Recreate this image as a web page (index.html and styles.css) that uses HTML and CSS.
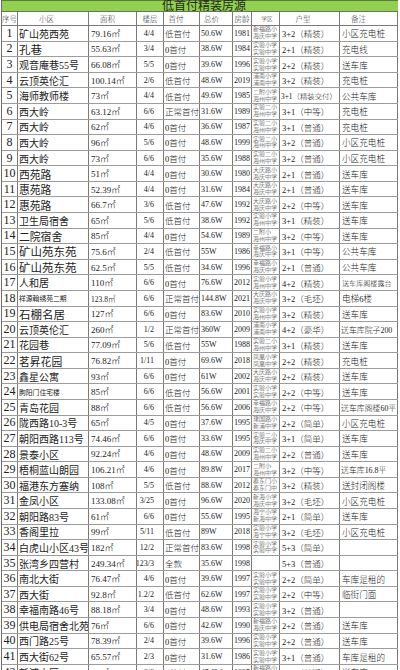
FILE: index.html
```html
<!DOCTYPE html>
<html lang="zh-CN">
<head>
<meta charset="utf-8">
<title>低首付精装房源</title>
<link rel="stylesheet" href="styles.css">
</head>
<body>
<div class="sheet">
  <div class="title">低首付精装房源</div>
  <div class="row head">
    <div>序号</div><div class="h-name">小区</div><div class="h-area">面积</div><div>楼层</div><div class="h-dp">首付</div><div class="h-tot">总价</div><div>房龄</div><div class="h-sch">学区</div><div class="h-type">户型</div><div class="h-note">备注</div>
  </div>

  <div class="row"><div class="n">1</div><div class="name">矿山苑西苑</div><div class="area">79.16㎡</div><div class="fl">4/4</div><div class="dp">低首付</div><div class="tot">50.6W</div><div class="age">1981</div><div class="sch"><span>新福路小</span><span>海庆中学</span></div><div class="type">3+2（精装）</div><div class="note">小区充电桩</div></div>
  <div class="row"><div class="n">2</div><div class="name lg">孔巷</div><div class="area">55.63㎡</div><div class="fl">3/4</div><div class="dp">0首付</div><div class="tot">38.6W</div><div class="age">1984</div><div class="sch"><span>实验小学</span><span>实验中学</span></div><div class="type">2+1（精装）</div><div class="note">充电线</div></div>
  <div class="row"><div class="n">3</div><div class="name">观音庵巷55号</div><div class="area">66.08㎡</div><div class="fl">5/5</div><div class="dp">0首付</div><div class="tot">39.6W</div><div class="age">1996</div><div class="sch"><span>实验小学</span><span>实验中学</span></div><div class="type">2+2（精装）</div><div class="note">送车库</div></div>
  <div class="row"><div class="n">4</div><div class="name">云顶英伦汇</div><div class="area">100.14㎡</div><div class="fl">2/6</div><div class="dp">低首付</div><div class="tot">48.6W</div><div class="age">2019</div><div class="sch"><span>浦南小学</span><span>浦南中学</span></div><div class="type">3+2（精装）</div><div class="note">充电桩</div></div>
  <div class="row"><div class="n">5</div><div class="name">海师教师楼</div><div class="area">73㎡</div><div class="fl">4/4</div><div class="dp">低首付</div><div class="tot">49.6W</div><div class="age">1985</div><div class="sch"><span>二附小学</span><span>海州中学</span></div><div class="type tight">3+1（精装交付）</div><div class="note">公共车库</div></div>
  <div class="row"><div class="n">6</div><div class="name">西大岭</div><div class="area">63.12㎡</div><div class="fl">6/6</div><div class="dp">正常首付</div><div class="tot">31.6W</div><div class="age">1989</div><div class="sch"><span>实验二小</span><span>海州中学</span></div><div class="type">3+1（中等）</div><div class="note">充电桩</div></div>
  <div class="row"><div class="n">7</div><div class="name">西大岭</div><div class="area">62㎡</div><div class="fl">4/6</div><div class="dp">0首付</div><div class="tot">36.6W</div><div class="age">1987</div><div class="sch"><span>实验二小</span><span>海州中学</span></div><div class="type">3+1（普通）</div><div class="note">充电桩</div></div>
  <div class="row"><div class="n">8</div><div class="name">西大岭</div><div class="area">96㎡</div><div class="fl">5/6</div><div class="dp">0首付</div><div class="tot">48.6W</div><div class="age">1999</div><div class="sch"><span>实验二小</span><span>海州中学</span></div><div class="type">3+2（普通）</div><div class="note">小区充电桩</div></div>
  <div class="row"><div class="n">9</div><div class="name">西大岭</div><div class="area">73㎡</div><div class="fl">6/6</div><div class="dp">0首付</div><div class="tot">35.6W</div><div class="age">1988</div><div class="sch"><span>实验二小</span><span>海州中学</span></div><div class="type">3+2（普通）</div><div class="note">小区充电桩</div></div>
  <div class="row"><div class="n">10</div><div class="name md">西苑路</div><div class="area">51㎡</div><div class="fl">4/4</div><div class="dp">0首付</div><div class="tot">30.6W</div><div class="age">1980</div><div class="sch"><span>大庆路小</span><span>海庆中学</span></div><div class="type">2+1（普通）</div><div class="note">送车库</div></div>
  <div class="row"><div class="n">11</div><div class="name md">惠苑路</div><div class="area">52.39㎡</div><div class="fl">4/4</div><div class="dp">0首付</div><div class="tot">31.6W</div><div class="age">1984</div><div class="sch"><span>大庆路小</span><span>海庆中学</span></div><div class="type">2+1（普通）</div><div class="note">送车库</div></div>
  <div class="row"><div class="n">12</div><div class="name md">惠苑路</div><div class="area">66.7㎡</div><div class="fl">3/6</div><div class="dp">低首付</div><div class="tot">47.6W</div><div class="age">1992</div><div class="sch"><span>大庆路小</span><span>海庆中学</span></div><div class="type">2+2（中等）</div><div class="note">送车库</div></div>
  <div class="row"><div class="n">13</div><div class="name">卫生局宿舍</div><div class="area">65㎡</div><div class="fl">5/6</div><div class="dp">低首付</div><div class="tot">38.6W</div><div class="age">1992</div><div class="sch"><span>实验小学</span><span>海州中学</span></div><div class="type">3+1（精装）</div><div class="note">送车库</div></div>
  <div class="row"><div class="n">14</div><div class="name md">二院宿舍</div><div class="area">85㎡</div><div class="fl">4/4</div><div class="dp">0首付</div><div class="tot">54.6W</div><div class="age">1989</div><div class="sch"><span>二附小</span><span>海州中学</span></div><div class="type">3+2（中等）</div><div class="note">送车库</div></div>
  <div class="row"><div class="n">15</div><div class="name lg">矿山苑东苑</div><div class="area">75.6㎡</div><div class="fl">2/4</div><div class="dp">低首付</div><div class="tot">55W</div><div class="age">1986</div><div class="sch"><span>幸福路小</span><span>海庆中学</span></div><div class="type">3+1（中等）</div><div class="note">公共车库</div></div>
  <div class="row"><div class="n">16</div><div class="name lg">矿山苑东苑</div><div class="area">62.5㎡</div><div class="fl">5/5</div><div class="dp">低首付</div><div class="tot">34.6W</div><div class="age">1996</div><div class="sch"><span>幸福路小</span><span>海庆中学</span></div><div class="type">2+1（普通）</div><div class="note">公共车库</div></div>
  <div class="row"><div class="n">17</div><div class="name">人和居</div><div class="area">110㎡</div><div class="fl">6/6</div><div class="dp">0首付</div><div class="tot">76.6W</div><div class="age">2012</div><div class="sch"><span>实验小学</span><span>海州中学</span></div><div class="type">4+2（精装）</div><div class="note xs">送车库阁楼露台</div></div>
  <div class="row"><div class="n">18</div><div class="name xs">祥源翰绣苑二期</div><div class="area sm">123.8㎡</div><div class="fl">6/6</div><div class="dp">正常首付</div><div class="tot">144.8W</div><div class="age">2021</div><div class="sch"><span>大庆路小</span><span>海庆中学</span></div><div class="type">3+2（毛坯）</div><div class="note">电梯6楼</div></div>
  <div class="row"><div class="n">19</div><div class="name lg">石棚名居</div><div class="area">127㎡</div><div class="fl">6/6</div><div class="dp">0首付</div><div class="tot">83.6W</div><div class="age">2010</div><div class="sch"><span>实验小学</span><span>海州中学</span></div><div class="type">3+2（精装）</div><div class="note">送车库</div></div>
  <div class="row"><div class="n">20</div><div class="name">云顶英伦汇</div><div class="area">260㎡</div><div class="fl">1/2</div><div class="dp">正常首付</div><div class="tot">360W</div><div class="age">2009</div><div class="sch"><span>浦南小学</span><span>浦南中学</span></div><div class="type">4+2（豪华）</div><div class="note sm">送车库院子200</div></div>
  <div class="row"><div class="n">21</div><div class="name">花园巷</div><div class="area">77.09㎡</div><div class="fl">5/6</div><div class="dp">低首付</div><div class="tot">55W</div><div class="age">1988</div><div class="sch"><span>实验二小</span><span>海州中学</span></div><div class="type">3+1（精装）</div><div class="note">送车库</div></div>
  <div class="row"><div class="n">22</div><div class="name md">茗昇花园</div><div class="area">76.82㎡</div><div class="fl">1/11</div><div class="dp">0首付</div><div class="tot">69.6W</div><div class="age">2018</div><div class="sch"><span>凤凰小学</span><span>凤凰中学</span></div><div class="type">2+2（精装）</div><div class="note">充电桩</div></div>
  <div class="row"><div class="n">23</div><div class="name">鑫星公寓</div><div class="area">93㎡</div><div class="fl">6/6</div><div class="dp">0首付</div><div class="tot">61W</div><div class="age">2002</div><div class="sch"><span>大庆路小</span><span>海庆中学</span></div><div class="type">2+2（精装）</div><div class="note">送车库</div></div>
  <div class="row"><div class="n">24</div><div class="name xs">朐阳门住宅楼</div><div class="area">85㎡</div><div class="fl">6/6</div><div class="dp">低首付</div><div class="tot">56.6W</div><div class="age">2001</div><div class="sch"><span>实验小学</span><span>实验中学</span></div><div class="type">2+2（中等）</div><div class="note">送车库</div></div>
  <div class="row"><div class="n">25</div><div class="name">青岛花园</div><div class="area">88㎡</div><div class="fl">6/6</div><div class="dp">低首付</div><div class="tot">56.6W</div><div class="age">2006</div><div class="sch"><span>幸福路小</span><span>海庆中学</span></div><div class="type">2+2（中等）</div><div class="note sm">送车库阁楼60平</div></div>
  <div class="row"><div class="n">26</div><div class="name">陇西路10-3号</div><div class="area">65㎡</div><div class="fl">4/5</div><div class="dp">0首付</div><div class="tot">37.6W</div><div class="age">1995</div><div class="sch"><span>建国路小</span><span>新浦中学</span></div><div class="type">2+2（简单）</div><div class="note">小区充电桩</div></div>
  <div class="row"><div class="n">27</div><div class="name">朝阳西路113号</div><div class="area">74.46㎡</div><div class="fl">6/6</div><div class="dp">0首付</div><div class="tot">33.6W</div><div class="age">1995</div><div class="sch"><span>实验二小</span><span>海庆中学</span></div><div class="type">3+1（简单）</div><div class="note">送车库</div></div>
  <div class="row"><div class="n">28</div><div class="name">景泰小区</div><div class="area">92.24㎡</div><div class="fl">4/6</div><div class="dp">0首付</div><div class="tot">48.6W</div><div class="age">2009</div><div class="sch"><span>实验二小</span><span>海州中学</span></div><div class="type">2+2（普通）</div><div class="note">送车库</div></div>
  <div class="row"><div class="n">29</div><div class="name">梧桐蓝山朗园</div><div class="area">106.21㎡</div><div class="fl">4/6</div><div class="dp">0首付</div><div class="tot">89.8W</div><div class="age">2017</div><div class="sch"><span>二附小</span><span>海州中学</span></div><div class="type">3+2（中等）</div><div class="note sm">送车库16.8平</div></div>
  <div class="row"><div class="n">30</div><div class="name">福港东方塞纳</div><div class="area">108㎡</div><div class="fl">5/5</div><div class="dp">低首付</div><div class="tot">88.6W</div><div class="age">2012</div><div class="sch"><span>秦东门小</span><span>秦东门中</span></div><div class="type">3+2（精装）</div><div class="note">送封闭阁楼</div></div>
  <div class="row"><div class="n">31</div><div class="name">金凤小区</div><div class="area">133.08㎡</div><div class="fl">3/25</div><div class="dp">0首付</div><div class="tot">96.6W</div><div class="age">2020</div><div class="sch"><span>新海小学</span><span>海庆中学</span></div><div class="type">3+2（毛坯）</div><div class="note">小区充电桩</div></div>
  <div class="row"><div class="n">32</div><div class="name">朝阳路83号</div><div class="area">61㎡</div><div class="fl">6/6</div><div class="dp">0首付</div><div class="tot">55.6W</div><div class="age">1995</div><div class="sch"><span>海宁小学</span><span>新海中学</span></div><div class="type">2+1（简单）</div><div class="note">送车库</div></div>
  <div class="row"><div class="n">33</div><div class="name">香阁里拉</div><div class="area">99㎡</div><div class="fl">5/11</div><div class="dp">低首付</div><div class="tot">89W</div><div class="age">2018</div><div class="sch"><span>实验小学</span><span>海宁中学</span></div><div class="type">3+2（毛坯）</div><div class="note">小区充电桩</div></div>
  <div class="row"><div class="n">34</div><div class="name">白虎山小区43号</div><div class="area">182㎡</div><div class="fl">12/2</div><div class="dp">正常首付</div><div class="tot">83.6W</div><div class="age">1998</div><div class="sch"><span>实验小学</span><span>实验中学</span></div><div class="type">5+3（简单）</div><div class="note"></div></div>
  <div class="row"><div class="n">35</div><div class="name">张湾乡四营村</div><div class="area">249.34㎡</div><div class="fl">123/3</div><div class="dp">全款</div><div class="tot">35.6W</div><div class="age">1998</div><div class="sch"></div><div class="type">5+3（普通）</div><div class="note"></div></div>
  <div class="row"><div class="n">36</div><div class="name">南北大街</div><div class="area">76.47㎡</div><div class="fl">4/6</div><div class="dp">0首付</div><div class="tot">39.6W</div><div class="age">1997</div><div class="sch"><span>实验小学</span><span>实验中学</span></div><div class="type">2+2（简单）</div><div class="note">车库是租的</div></div>
  <div class="row"><div class="n">37</div><div class="name">西大街</div><div class="area">92.8㎡</div><div class="fl">1.2/2</div><div class="dp">低首付</div><div class="tot">62.6W</div><div class="age">1997</div><div class="sch"><span>实验小学</span><span>实验中学</span></div><div class="type">2+2（中等）</div><div class="note">临街门面</div></div>
  <div class="row"><div class="n">38</div><div class="name">幸福南路46号</div><div class="area">88.18㎡</div><div class="fl">3/4</div><div class="dp">0首付</div><div class="tot">48.6W</div><div class="age">1993</div><div class="sch"><span>实验小学</span><span>实验中学</span></div><div class="type">3+2（普通）</div><div class="note"></div></div>
  <div class="row"><div class="n">39</div><div class="name">供电局宿舍北苑</div><div class="area">76㎡</div><div class="fl">6/6</div><div class="dp">0首付</div><div class="tot">42.6W</div><div class="age">1990</div><div class="sch"><span>新福路小</span><span>海庆中学</span></div><div class="type">2+2（普通）</div><div class="note">送车库</div></div>
  <div class="row"><div class="n">40</div><div class="name">西门路25号</div><div class="area">78.39㎡</div><div class="fl">2/4</div><div class="dp">0首付</div><div class="tot">39.6W</div><div class="age">1996</div><div class="sch"><span>实验小学</span><span>实验中学</span></div><div class="type">2+2（普通）</div><div class="note">送车库</div></div>
  <div class="row"><div class="n">41</div><div class="name">西大街62号</div><div class="area">65.57㎡</div><div class="fl">2/3</div><div class="dp">0首付</div><div class="tot">31.6W</div><div class="age">1986</div><div class="sch"><span>实验小学</span><span>实验中学</span></div><div class="type">3+1（普通）</div><div class="note">车库是租的</div></div>
  <div class="row"><div class="n">42</div><div class="name">新浦小区</div><div class="area">80㎡</div><div class="fl">6/6</div><div class="dp">0首付</div><div class="tot">45.6W</div><div class="age">1995</div><div class="sch"><span>新福路小</span><span>海庆中学</span></div><div class="type">3+2（普通）</div><div class="note">送车库</div></div>
</div>
</body>
</html>
```

FILE: styles.css
```css
* { box-sizing: border-box; }

html, body {
  margin: 0;
  padding: 0;
  background: #ffffff;
}

body {
  font-family: "Liberation Serif", "Noto Sans CJK SC", serif;
  font-weight: 300;
  color: #222222;
  overflow: hidden;
}

.sheet {
  margin-left: 1px;
  width: 397px;
  border-left: 1px solid #6e6e6e;
}

.title {
  height: 12px;
  background: #92d050;
  border-top: 1px solid #5d7a3a;
  border-bottom: 1px solid #6e6e6e;
  font-size: 12px;
  line-height: 11px;
  text-align: center;
  padding-left: 8px;
  color: #1d2b12;
  font-weight: 400;
  white-space: nowrap;
}

.row {
  display: grid;
  grid-template-columns: 16px 71px 48px 27px 36px 33px 19px 28px 60px 58px;
  height: 15.58px;
  border-bottom: 1px solid #9c9c9c;
}

.row > div {
  border-right: 1px solid #7a7a7a;
  display: flex;
  align-items: center;
  overflow: hidden;
  white-space: nowrap;
}

.head {
  height: 14.1px;
  border-bottom: 1px solid #7a7a7a;
}

.head > div {
  justify-content: center;
  font-size: 7.5px;
  color: #333333;
}

.head .h-name { padding-right: 13px; }
.head .h-area { padding-right: 10px; }
.head .h-dp { padding-right: 11px; }
.head .h-tot { padding-right: 9px; }
.head .h-sch { font-size: 5.8px; padding-left: 3px; }
.head .h-type { padding-right: 13px; }
.head .h-note { padding-right: 20px; }

.n {
  justify-content: center;
  font-size: 12px;
  font-weight: 400;
}

.name {
  font-size: 10px;
  padding-left: 1px;
  font-weight: 400;
}
.name.md { font-size: 10.8px; }
.name.lg { font-size: 11.5px; }
.name.xs { font-size: 6.8px; }

.area {
  font-size: 9px;
  padding-left: 2px;
}
.area.sm { font-size: 7.5px; }

.fl {
  justify-content: flex-end;
  padding-right: 9px;
  font-size: 8px;
}

.dp {
  font-size: 8.5px;
  padding-left: 1px;
}

.tot {
  font-size: 8px;
  padding-left: 1px;
}

.age {
  justify-content: center;
  font-size: 8px;
}

.row > .sch {
  flex-direction: column;
  justify-content: center;
  align-items: flex-start;
  font-size: 6px;
  line-height: 6.9px;
  padding-left: 1px;
}

.type {
  font-size: 8.5px;
  padding-left: 2px;
}
.type.tight { font-size: 7.4px; padding-left: 1px; }

.note {
  font-size: 8.6px;
  padding-left: 2px;
}
.note.sm { font-size: 7.9px; padding-left: 1px; }
.note.xs { font-size: 7.1px; }
```
